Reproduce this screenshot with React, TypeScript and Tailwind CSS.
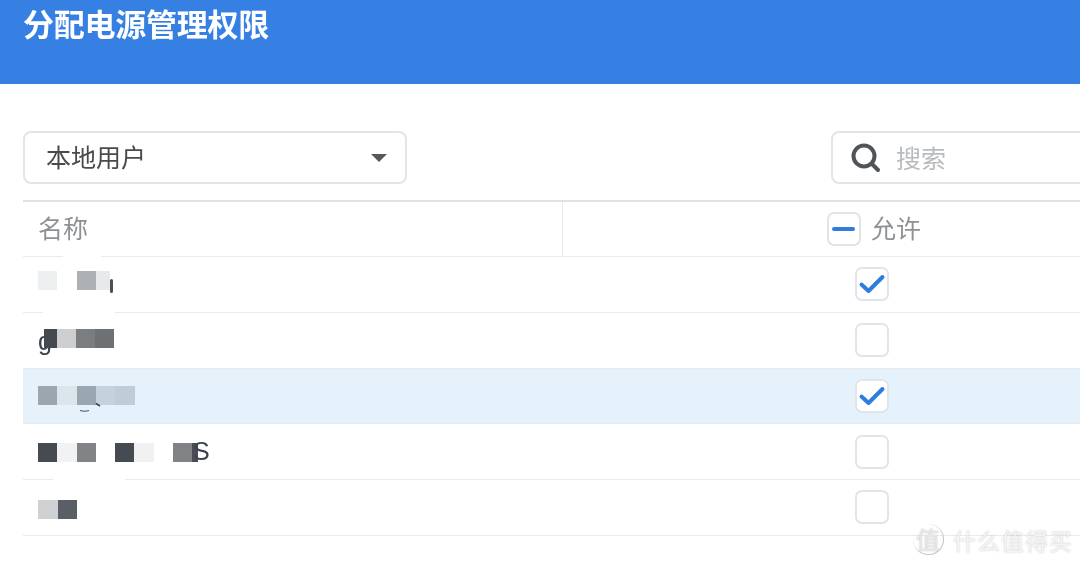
const Block = ({ color, width = 19 }: { color: string; width?: number }) => (
  <span className="h-[19px] shrink-0" style={{ width, backgroundColor: color }} />
);

const Checkbox = ({ state }: { state?: "checked" | "mixed" }) => (
  <span className="flex h-[34px] w-[34px] shrink-0 items-center justify-center rounded-[7px] border-2 border-[#e1e4e8] bg-white">
    {state === "checked" && (
      <svg width="28" height="24" viewBox="0 0 28 24" fill="none">
        <path d="M3.5 12.5L10.5 19L24.5 5" stroke="#2f7de1" strokeWidth="4" strokeLinecap="round" strokeLinejoin="round" />
      </svg>
    )}
    {state === "mixed" && <span className="h-[4px] w-[23px] rounded-full bg-[#2f7de1]" />}
  </span>
);

const Row = ({
  children,
  checked,
  selected,
  nudge = "",
}: {
  children: React.ReactNode;
  checked?: boolean;
  selected?: boolean;
  nudge?: string;
}) => (
  <div className={`flex h-[55.75px] border-b border-[#e8eaed] ${selected ? "bg-[#e5f1fb]" : ""}`}>
    <div className={`flex w-[539px] items-center pl-[15px] font-['Liberation_Sans'] text-[25px] leading-none text-[#3d4450] ${nudge}`}>
      {children}
    </div>
    <div className="flex w-[620px] items-center justify-center">
      <Checkbox state={checked ? "checked" : undefined} />
    </div>
  </div>
);

export default function App() {
  return (
    <div
      className="relative h-[565px] w-[1080px] overflow-hidden bg-white blur-[0.4px]"
      style={{ fontFamily: '"Noto Sans CJK SC", "Liberation Sans", sans-serif' }}
    >
      <header className="h-[84px] bg-[#3680e3] pt-[2px] pl-[23px]">
        <h1 className="text-[31px] leading-[42px] font-bold tracking-[-0.25px] text-white">分配电源管理权限</h1>
      </header>

      <div className="flex pt-[47px] pl-[23px]">
        <div className="flex h-[53px] w-[384px] shrink-0 items-center justify-between rounded-lg border-2 border-[#e3e5e8] pr-[18px] pb-[1px] pl-[21px] text-[25px] text-[#4a4a4a]">
          本地用户
          <span className="mt-[1px] h-0 w-0 border-x-[8px] border-t-[8px] border-x-transparent border-t-[#55585c]" />
        </div>
        <div className="ml-[424px] flex h-[53px] w-[300px] shrink-0 items-center gap-[15px] rounded-lg border-2 border-[#e3e5e8] pl-[18px] text-[25px] text-[#b9bcbf]">
          <svg width="30" height="30" viewBox="0 0 30 30" fill="none">
            <circle cx="13" cy="13" r="10.5" stroke="#50545a" strokeWidth="4" />
            <path d="M21 21L27 27" stroke="#50545a" strokeWidth="4" strokeLinecap="round" />
          </svg>
          搜索
        </div>
      </div>

      <div className="mt-4 ml-[23px] w-[1159px] border-t-2 border-[#dfe3e8]">
        <div className="flex h-[55px] border-b border-[#e8eaed] text-[25px] text-[#8e9194]">
          <div className="flex w-[540px] items-center border-r border-[#e8eaed] pb-[3px] pl-[15px]">名称</div>
          <div className="flex w-[619px] items-center justify-center gap-[10px] pl-[3px]">
            <Checkbox state="mixed" />
            <span className="pb-[2px]">允许</span>
          </div>
        </div>

        <Row checked nudge="pb-[8px]">
          <Block color="#eeeff0" />
          <span className="w-[20px]" />
          <Block color="#adb0b3" />
          <Block color="#e8e9ea" width={14} />
          <span className="mt-[12px] h-[14px] w-[3px] rounded-sm bg-[#4a4f58]" />
        </Row>
        <Row nudge="pb-[4px]">
          <span className="-mr-[8px] pt-[6px]">g</span>
          <Block color="#454950" width={13} />
          <Block color="#cdcfd1" />
          <Block color="#7b7e81" />
          <Block color="#6e7174" />
        </Row>
        <Row checked selected>
          <Block color="#9ba6ae" />
          <Block color="#dbe5ec" width={20} />
          <Block color="#9aa6b0" />
          <Block color="#c5d2dd" />
          <Block color="#bfcdd7" width={20} />
        </Row>
        <Row nudge="pt-[2px]">
          <Block color="#464a52" />
          <Block color="#f1f2f3" width={20} />
          <Block color="#818386" />
          <span className="w-[19px]" />
          <Block color="#464a52" />
          <Block color="#f0f1f1" width={20} />
          <span className="w-[19px]" />
          <Block color="#808285" />
          <Block color="#484c54" width={6} />
          <span className="-ml-[5px] pb-[2px]">S</span>
        </Row>
        <Row nudge="pt-[5px]">
          <Block color="#cfd1d2" width={20} />
          <Block color="#5a5e66" />
        </Row>
      </div>

      {/* blur smudges over row lines */}
      <div className="absolute top-[310px] left-[43px] h-[4px] w-[72px] bg-white" />
      <div className="absolute top-[478px] left-[53px] h-[4px] w-[72px] bg-white" />
      <div className="absolute top-[255px] left-[63px] h-[3px] w-[38px] bg-white" />

      {/* glyph scraps peeking out of the mosaic */}
      <svg className="absolute top-[400px] left-[76px]" width="28" height="14" viewBox="0 0 28 14" fill="none">
        <path d="M4 10.5C7 11.5 10 11.5 13 10.5" stroke="#4a5563" strokeWidth="1.2" />
        <path d="M20 3.5L24 6" stroke="#3d4450" strokeWidth="1.6" />
      </svg>

      {/* watermark */}
      <div className="absolute top-[524px] left-[913px] flex items-center gap-[9px] [text-shadow:0_0_2px_rgba(120,120,120,0.45)]">
        <span className="flex h-[31px] w-[31px] items-center justify-center rounded-full border-r border-b border-[#c4c4c4] text-[24px] leading-none text-[#e6e6e6]">
          值
        </span>
        <span className="text-[23px] leading-[30px] tracking-[1px] text-[#f4f4f4]">什么值得买</span>
      </div>
    </div>
  );
}
